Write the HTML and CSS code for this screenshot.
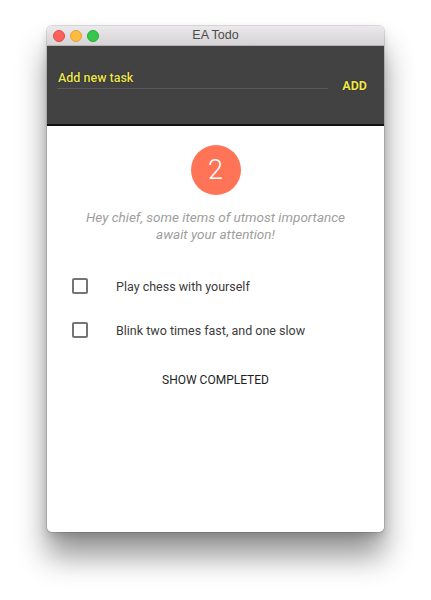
FILE: index.html
```html
<!DOCTYPE html>
<html>
<head>
<meta charset="utf-8">
<link rel="stylesheet" href="styles.css">
</head>
<body>
<div class="window">
  <div class="titlebar">
    <div class="lights">
      <span class="light red"></span>
      <span class="light yellow"></span>
      <span class="light green"></span>
    </div>
    <div class="title">EA Todo</div>
  </div>
  <div class="header">
    <div class="field">
      <div class="label">Add new task</div>
      <div class="line"></div>
    </div>
    <div class="add">ADD</div>
  </div>
  <div class="content">
    <div class="badge">2</div>
    <p class="message">Hey chief, some items of utmost importance<br>await your attention!</p>
    <ul class="tasks">
      <li class="task"><span class="box"></span><span class="text">Play chess with yourself</span></li>
      <li class="task"><span class="box"></span><span class="text">Blink two times fast, and one slow</span></li>
    </ul>
    <div class="show">SHOW COMPLETED</div>
  </div>
</div>
</body>
</html>
```

FILE: styles.css
```css
html, body {
  margin: 0;
  padding: 0;
  background: #ffffff;
}
body {
  width: 431px;
  height: 600px;
  padding: 26px 0 0 47px;
  box-sizing: border-box;
  font-family: Roboto, "Liberation Sans", sans-serif;
}
.window {
  width: 337px;
  height: 506px;
  border-radius: 5px;
  background: #ffffff;
  overflow: hidden;
  box-shadow: 0 24px 30px rgba(0,0,0,0.42), 0 0 0 1px rgba(0,0,0,0.12), 0 4px 10px rgba(0,0,0,0.15);
  display: flex;
  flex-direction: column;
}
.titlebar {
  height: 19px;
  flex: none;
  background: linear-gradient(#ebe9eb, #d5d3d5);
  display: flex;
  align-items: center;
  position: relative;
  border-bottom: 1px solid #b5b3b5;
}
.lights {
  display: flex;
  gap: 5px;
  padding-left: 6px;
}
.light {
  width: 12px;
  height: 12px;
  border-radius: 50%;
  box-sizing: border-box;
}
.red { background: #fc605b; border: 0.5px solid #de4a44; }
.yellow { background: #fdbc40; border: 0.5px solid #dea236; }
.green { background: #34c84a; border: 0.5px solid #27aa35; }
.title {
  position: absolute;
  left: 0;
  right: 0;
  top: 0;
  line-height: 19px;
  text-align: center;
  font-family: "Liberation Sans", Arial, sans-serif;
  font-size: 12.5px;
  color: #4a4a4a;
}
.header {
  height: 78px;
  flex: none;
  background: #424242;
  border-bottom: 2px solid #111111;
  display: flex;
  align-items: flex-start;
  padding: 0 17px 0 10px;
  box-sizing: content-box;
}
.field {
  flex: 1;
  padding-top: 25px;
}
.label {
  font-size: 12.5px;
  font-weight: 500;
  color: #f0e93a;
  text-shadow: 0 0 1px #1a1a50, 0 0 1px #1a1a50;
  line-height: 14px;
  padding-left: 1px;
}
.line {
  height: 1px;
  background: #5a5a5a;
  margin-top: 3px;
}
.add {
  margin-left: 14px;
  padding-top: 33px;
  font-size: 12.5px;
  font-weight: 700;
  color: #f0e93a;
  text-shadow: 0 0 1px #1a1a50, 0 0 1px #1a1a50;
  line-height: 14px;
}
.content {
  display: flex;
  flex-direction: column;
  align-items: center;
  padding-top: 19px;
}
.badge {
  width: 50px;
  height: 50px;
  border-radius: 50%;
  background: #ff7357;
  color: #ffffff;
  font-size: 27px;
  font-weight: 300;
  display: flex;
  align-items: center;
  justify-content: center;
}
.message {
  margin: 14px 0 0;
  text-align: center;
  font-style: italic;
  font-size: 13.5px;
  line-height: 17px;
  color: #9e9e9e;
}
.tasks {
  list-style: none;
  margin: 35px 0 0;
  padding: 0;
  align-self: stretch;
  display: flex;
  flex-direction: column;
  gap: 28px;
}
.task {
  display: flex;
  align-items: center;
  padding-left: 25px;
  height: 16px;
}
.box {
  width: 16px;
  height: 16px;
  border: 2px solid #757575;
  border-radius: 2px;
  box-sizing: border-box;
}
.text {
  margin-left: 28px;
  font-size: 12.5px;
  color: #3c3c3c;
}
.show {
  margin-top: 35px;
  font-size: 12px;
  font-weight: 400;
  color: #1e1e1e;
  letter-spacing: 0;
}
```
